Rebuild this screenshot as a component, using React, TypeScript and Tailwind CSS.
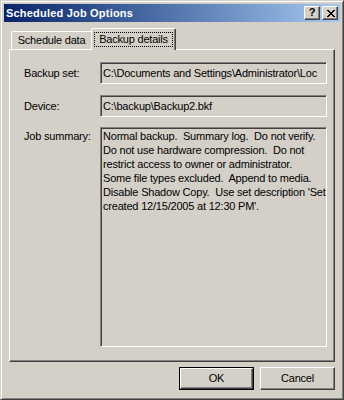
const font = "font-['Liberation_Sans',Arial,sans-serif]";

const raised =
  "border border-t-white border-l-white border-r-[#404040] border-b-[#404040] shadow-[inset_-1px_-1px_#808080]";
const sunken =
  "border border-t-[#808080] border-l-[#808080] border-r-white border-b-white shadow-[inset_1px_1px_#404040]";

function CaptionButton({ children }: { children: React.ReactNode }) {
  return (
    <div className={`w-[16px] h-[14px] bg-[#d4d0c8] flex items-center justify-center ${raised}`}>
      {children}
    </div>
  );
}

function CloseGlyph() {
  const rows: [number, number][][] = [
    [[0, 2], [6, 2]],
    [[1, 2], [5, 2]],
    [[2, 4]],
    [[3, 2]],
    [[2, 4]],
    [[1, 2], [5, 2]],
    [[0, 2], [6, 2]],
  ];
  return (
    <svg width="8" height="7" viewBox="0 0 8 7" shapeRendering="crispEdges" className="-mr-[1px]">
      {rows.map((r, y) =>
        r.map(([x, w], i) => <rect key={`${y}-${i}`} x={x} y={y} width={w} height={1} fill="#000" />)
      )}
    </svg>
  );
}

function Field({ value }: { value: string }) {
  return (
    <div className={`w-[227px] h-[22px] flex items-center pl-[2px] overflow-hidden whitespace-nowrap ${sunken}`}>
      {value}
    </div>
  );
}

const summary = [
  "Normal backup.  Summary log.  Do not verify.",
  "Do not use hardware compression.  Do not",
  "restrict access to owner or administrator.",
  "Some file types excluded.  Append to media.",
  "Disable Shadow Copy.  Use set description 'Set",
  "created 12/15/2005 at 12:30 PM'.",
];

export default function App() {
  return (
    <div
      className={`w-[344px] h-[400px] bg-[#d4d0c8] text-black text-[11px] tracking-[-0.2px] ${font} border border-t-[#d4d0c8] border-l-[#d4d0c8] border-r-[#404040] border-b-[#404040] shadow-[inset_1px_1px_#fff,inset_-1px_-1px_#808080] p-[3px] flex flex-col`}
    >
      {/* title bar */}
      <div className="h-[18px] flex items-center bg-linear-to-r from-[#0a246a] to-[#a6caf0] pl-[2px] pr-[2px]">
        <span className="text-white font-bold text-[11px] tracking-[0.2px] flex-1">Scheduled Job Options</span>
        <div className="flex">
          <CaptionButton>
            <span className="font-bold text-[11px] leading-none -mt-[1px]">?</span>
          </CaptionButton>
          <div className="ml-[2px]">
            <CaptionButton>
              <CloseGlyph />
            </CaptionButton>
          </div>
        </div>
      </div>

      <div className="px-[5px] mt-[6px] flex flex-col">
        {/* tabs */}
        <div className="h-[21px] flex items-end pl-[2px]">
          <div className="w-[80px] h-[18px] border-l border-t border-white rounded-tl-[2px] flex items-center justify-center">
            Schedule data
          </div>
          <div className="relative z-10 -mb-[1px] w-[85px] h-[22px] bg-[#d4d0c8] border-l border-t border-white border-r border-r-[#404040] shadow-[inset_-1px_0_#808080] rounded-t-[2px] pt-[3px] pl-[2px]">
            <div className="w-[79px] h-[15px] border border-dotted border-black flex items-center justify-center">
              Backup details
            </div>
          </div>
        </div>

        {/* panel */}
        <div className="h-[313px] border border-t-white border-l-white border-r-[#404040] border-b-[#404040] shadow-[inset_-1px_-1px_#808080] pt-[12px] pl-[14px] flex flex-col">
          <div className="flex items-center">
            <span className="w-[76px]">Backup set:</span>
            <Field value="C:\Documents and Settings\Administrator\Loc" />
          </div>
          <div className="flex items-center mt-[11px]">
            <span className="w-[76px]">Device:</span>
            <Field value="C:\backup\Backup2.bkf" />
          </div>
          <div className="flex items-start mt-[10px]">
            <span className="w-[76px] pt-[2px] leading-[14px]">Job summary:</span>
            <div className={`w-[227px] h-[220px] pl-[2px] pt-[1px] leading-[14px] ${sunken}`}>
              {summary.map((l, i) => (
                <div key={i} className="whitespace-pre">
                  {l}
                </div>
              ))}
            </div>
          </div>
        </div>

        {/* buttons */}
        <div className="flex justify-end gap-[6px] mt-[5px]">
          <div className="w-[75px] h-[23px] border border-black">
            <div className={`w-full h-full flex items-center justify-center ${raised}`}>OK</div>
          </div>
          <div className={`w-[75px] h-[23px] flex items-center justify-center ${raised}`}>Cancel</div>
        </div>
      </div>
    </div>
  );
}
